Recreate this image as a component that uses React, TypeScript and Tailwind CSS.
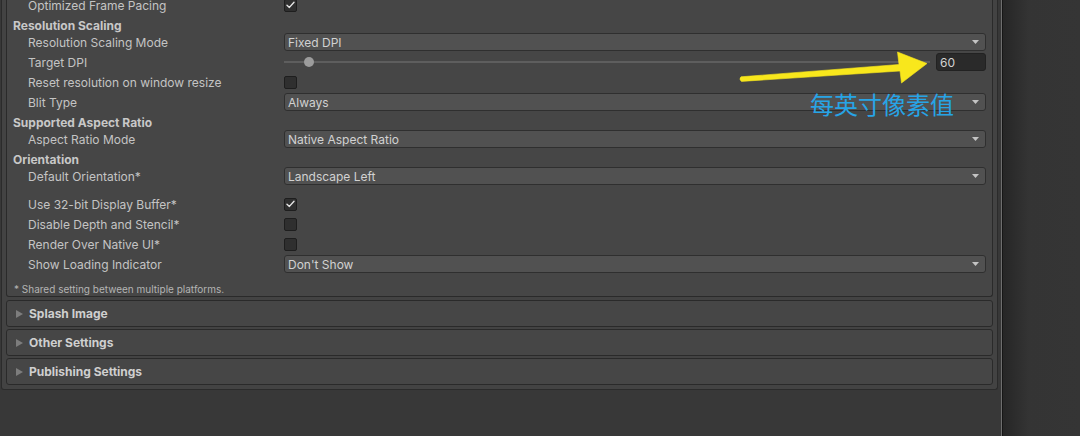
import React from "react";

const Check = () => (
  <svg width="9" height="8" viewBox="0 0 9 8" className="block">
    <path d="M1 4.2 L3.4 6.4 L8 1.2" fill="none" stroke="#e6e6e6" strokeWidth="1.4" strokeLinecap="round" strokeLinejoin="round" />
  </svg>
);

const Checkbox = ({ checked }: { checked?: boolean }) => (
  <div className="w-[13px] h-[13px] rounded-[2px] bg-[#2f2f2f] border border-[#1e1e1e] flex items-center justify-center">
    {checked ? <Check /> : null}
  </div>
);

const Dropdown = ({ value }: { value: string }) => (
  <div className="h-[18px] flex-1 border border-[#2f2f2f] rounded-[3px] bg-[#515151] pl-[3px] pr-[6px] flex items-center justify-between">
    <span className="text-[12px] leading-[16px] text-[#d2d2d2] pt-[1px]">{value}</span>
    <svg width="7" height="4" viewBox="0 0 7 4" className="block">
      <path d="M0 0 L7 0 L3.5 4 Z" fill="#c4c4c4" />
    </svg>
  </div>
);

const Row = ({ label, children, mb = true }: { label: string; children: React.ReactNode; mb?: boolean }) => (
  <div className={`h-[18px] flex items-center pl-[21px] pr-[6px] ${mb ? "mb-[2px]" : ""}`}>
    <div className="w-[256px] flex-none text-[12px] leading-[16px] pt-[2px] text-[#c4c4c4] whitespace-nowrap">{label}</div>
    <div className="flex-1 flex items-center">{children}</div>
  </div>
);

const Header = ({ label }: { label: string }) => (
  <div className="h-[17px] flex items-center pl-[6px] pt-[2px] text-[12px] leading-[16px] font-bold text-[#c8c8c8]">{label}</div>
);

const Foldout = ({ label }: { label: string }) => (
  <div className="h-[27px] border border-[#2a2a2a] rounded-[3px] bg-[#464646] flex items-center pl-[9px]">
    <svg width="7" height="8" viewBox="0 0 7 8" className="block">
      <path d="M0 0 L7 4 L0 8 Z" fill="#7d7d7d" />
    </svg>
    <span className="ml-[6px] text-[12px] leading-[16px] font-bold text-[#cfcfcf]">{label}</span>
  </div>
);

export default function App() {
  return (
    <div
      className="w-[1080px] h-[436px] flex bg-[#383838] overflow-hidden relative"
      style={{ fontFamily: "Inter, 'Noto Sans', sans-serif" }}
    >
      <div className="w-[1001px] flex-none flex flex-col">
        <div className="ml-[1px] w-[997px] flex flex-col bg-[#434343] border-l border-r border-b border-[#2b2b2b] rounded-b-[3px] px-[4px] pb-[4px]">
          <div className="-mt-[4px] flex flex-col bg-[#464646] border-l border-r border-b border-[#2a2a2a] rounded-b-[3px]">
            <Row label="Optimized Frame Pacing">
              <Checkbox checked />
            </Row>
            <Header label="Resolution Scaling" />
            <Row label="Resolution Scaling Mode">
              <Dropdown value="Fixed DPI" />
            </Row>
            <Row label="Target DPI">
              <div className="flex-1 h-[2px] bg-[#5e5e5e] relative">
                <div className="absolute left-[20px] -top-[4px] w-[10px] h-[10px] rounded-full bg-[#9c9c9c]" />
              </div>
              <div className="ml-[6px] w-[50px] h-[18px] border border-[#222222] rounded-[3px] bg-[#2a2a2a] pl-[3px] pt-[1px] flex items-center text-[12px] leading-[16px] text-[#d2d2d2]">
                60
              </div>
            </Row>
            <Row label="Reset resolution on window resize">
              <Checkbox />
            </Row>
            <Row label="Blit Type">
              <Dropdown value="Always" />
            </Row>
            <Header label="Supported Aspect Ratio" />
            <Row label="Aspect Ratio Mode">
              <Dropdown value="Native Aspect Ratio" />
            </Row>
            <Header label="Orientation" />
            <Row label="Default Orientation*">
              <Dropdown value="Landscape Left" />
            </Row>
            <div className="h-[8px]" />
            <Row label="Use 32-bit Display Buffer*">
              <Checkbox checked />
            </Row>
            <Row label="Disable Depth and Stencil*">
              <Checkbox />
            </Row>
            <Row label="Render Over Native UI*">
              <Checkbox />
            </Row>
            <Row label="Show Loading Indicator">
              <Dropdown value="Don't Show" />
            </Row>
            <div className="h-[21px] pt-[8px] pl-[7px] text-[10px] leading-[12px] text-[#b4b4b4]">
              * Shared setting between multiple platforms.
            </div>
          </div>
          <div className="mt-[3px] flex flex-col gap-[2px]">
            <Foldout label="Splash Image" />
            <Foldout label="Other Settings" />
            <Foldout label="Publishing Settings" />
          </div>
        </div>
      </div>
      <div className="w-[1px] flex-none bg-[#6e6e6e]" />
      <div className="w-[1px] flex-none bg-[#161616]" />
      <div className="flex-1 bg-[linear-gradient(to_right,#262626,#343434_26px,#353535)]" />

      <svg className="absolute left-0 top-0 pointer-events-none" width="1080" height="436" viewBox="0 0 1080 436">
        <path
          d="M741 76.8 L899 64.5 L897.5 52 L927 63.5 L901.5 83 L900 71 L741.5 81.4 Q738.6 79.2 741 76.8 Z"
          fill="#f8e71c"
          stroke="#f8e71c"
          strokeWidth="0.6"
          strokeLinejoin="round"
        />
      </svg>
      <div
        className="absolute left-[810px] top-[92px] text-[24px] leading-[24px] text-[#27a4e6] whitespace-nowrap"
        style={{ fontFamily: "'Noto Sans CJK SC', sans-serif" }}
      >
        每英寸像素值
      </div>
    </div>
  );
}
